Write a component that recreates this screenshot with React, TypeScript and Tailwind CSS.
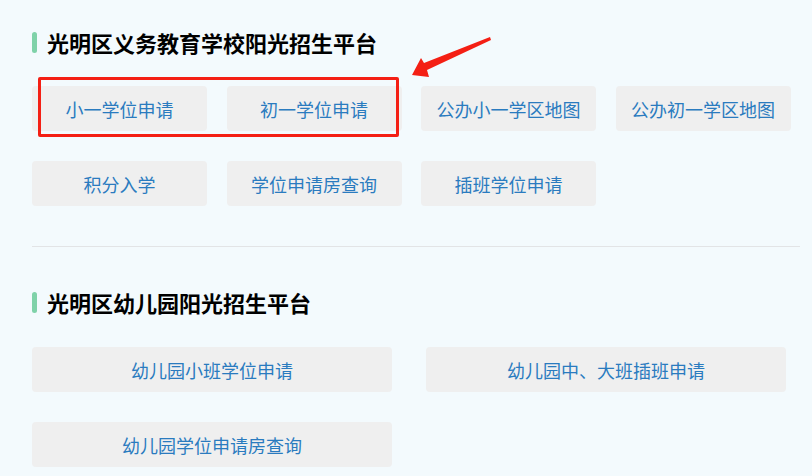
const primary = ["小一学位申请", "初一学位申请", "公办小一学区地图", "公办初一学区地图", "积分入学", "学位申请房查询", "插班学位申请"]
const kinder = ["幼儿园小班学位申请", "幼儿园中、大班插班申请", "幼儿园学位申请房查询"]

function Title({ text }: { text: string }) {
	return (
		<div className="flex items-center h-[24px]">
			<span className="w-[5px] h-[21px] rounded-full bg-[#7fd2a9] mr-[10px]" />
			<h2 className="text-[22px] leading-[24px] font-bold text-black">{text}</h2>
		</div>
	)
}

function Tile({ label }: { label: string }) {
	return (
		<div className="h-[45px] rounded-[4px] bg-[#efefef] flex items-center justify-center text-[18px] leading-[22px] text-[#2a7bbf]">
			{label}
		</div>
	)
}

export default function App() {
	return (
		<div
			className="relative w-[812px] h-[476px] overflow-hidden bg-[#f3fafd] pl-[32px] pt-[30px]"
			style={{ fontFamily: '"Noto Sans CJK SC", "Noto Sans", sans-serif' }}
		>
			<Title text="光明区义务教育学校阳光招生平台" />
			<div className="mt-[32px] grid grid-cols-[repeat(4,175px)] gap-x-[19.5px] gap-y-[30px]">
				{primary.map((p) => (
					<Tile key={p} label={p} />
				))}
			</div>

			<div className="mt-[40px] w-[768px] h-px bg-[#e2e4e6]" />

			<div className="mt-[43px]">
				<Title text="光明区幼儿园阳光招生平台" />
			</div>
			<div className="mt-[33px] grid grid-cols-[repeat(2,360px)] gap-x-[34px] gap-y-[30px]">
				{kinder.map((k) => (
					<Tile key={k} label={k} />
				))}
			</div>

			{/* annotation overlay */}
			<div className="absolute left-[38px] top-[77px] w-[361px] h-[60px] border-[3px] border-[#f41f14] rounded-[2px] pointer-events-none" />
			<svg className="absolute left-0 top-0 pointer-events-none" width="812" height="476">
				<polygon
					points="490,37 424,63 421,58 412,75 429,77 427,70 491,40"
					fill="#f41f14"
				/>
			</svg>
		</div>
	)
}
